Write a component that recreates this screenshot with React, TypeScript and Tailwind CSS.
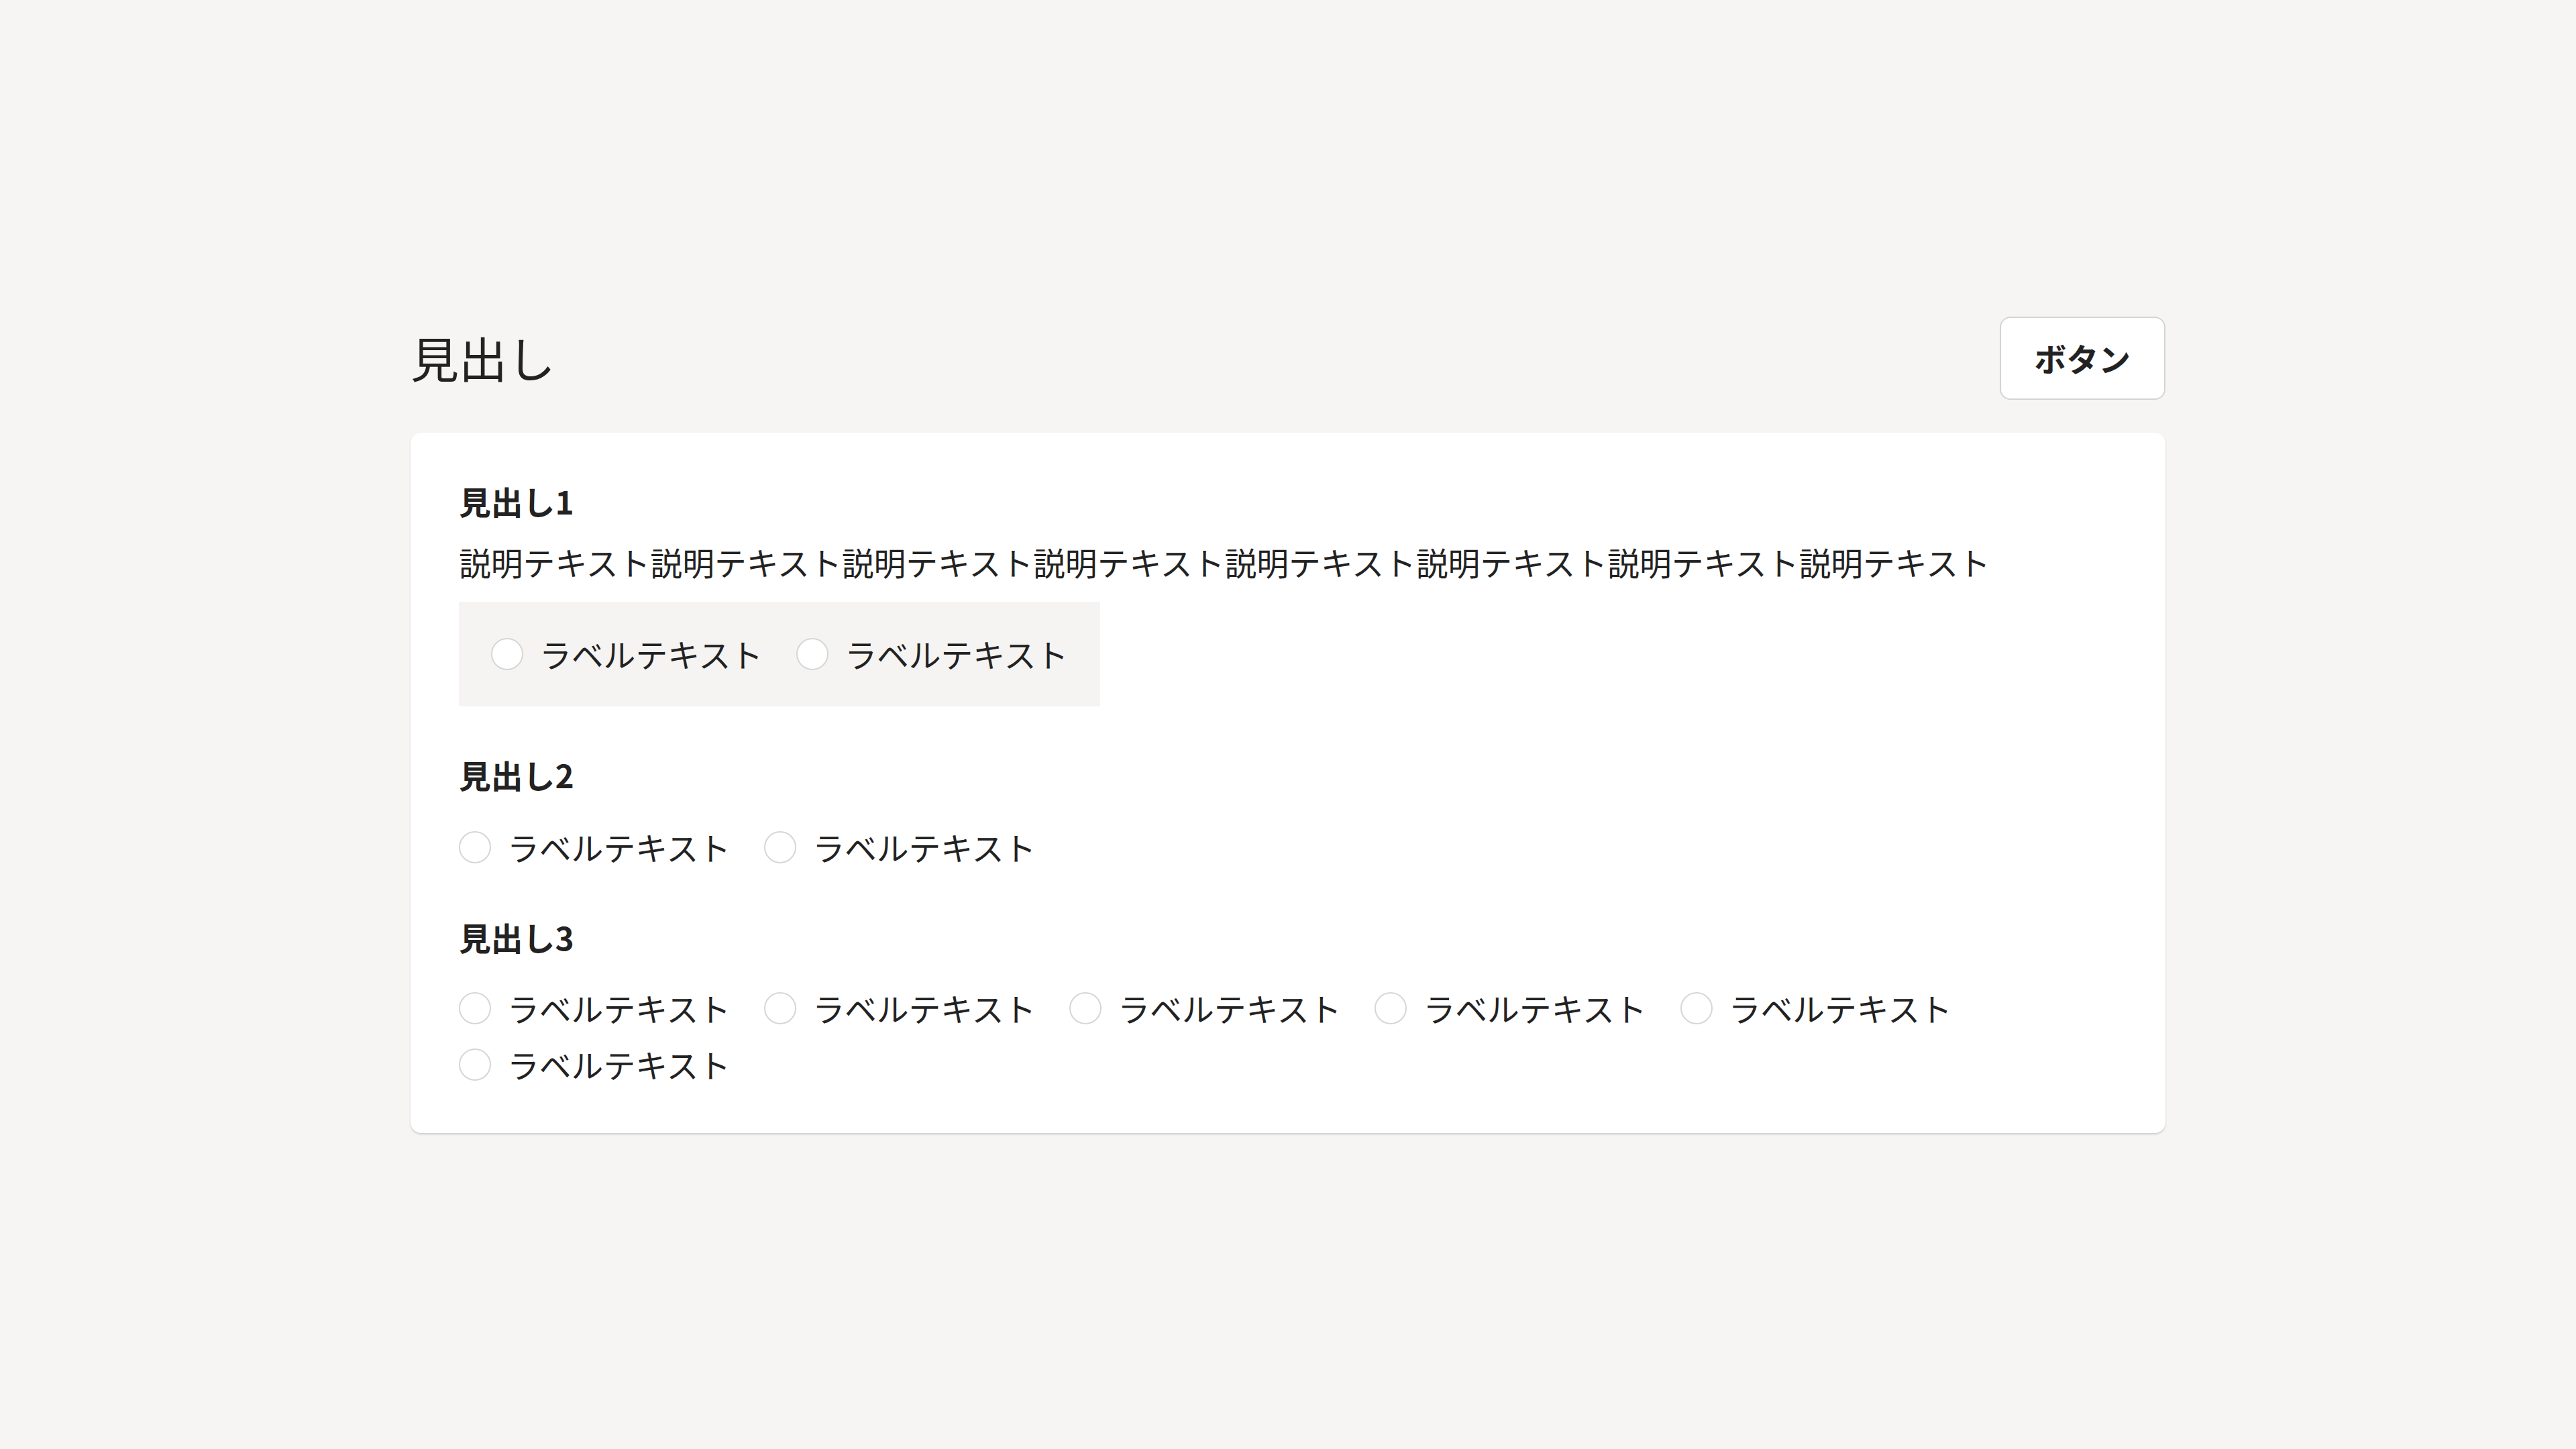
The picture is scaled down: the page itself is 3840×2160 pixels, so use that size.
import { useState } from "react";

const sectionOneOptions = ["ラベルテキスト", "ラベルテキスト"];
const sectionTwoOptions = ["ラベルテキスト", "ラベルテキスト"];
const sectionThreeOptions = [
  "ラベルテキスト",
  "ラベルテキスト",
  "ラベルテキスト",
  "ラベルテキスト",
  "ラベルテキスト",
  "ラベルテキスト",
];

interface RadioGroupProps {
  name: string;
  options: string[];
  className?: string;
}

function RadioGroup({ name, options, className = "" }: RadioGroupProps) {
  const [selected, setSelected] = useState<number | null>(null);

  return (
    <div className={`flex flex-wrap gap-x-[50px] gap-y-6 ${className}`}>
      {options.map((label, i) => (
        <label
          key={i}
          className="flex h-[60px] cursor-pointer items-center gap-6"
        >
          <input
            type="radio"
            name={name}
            checked={selected === i}
            onChange={() => setSelected(i)}
            className="m-0 h-12 w-12 shrink-0 appearance-none rounded-full border-[2.5px] border-[#d6d6d6] bg-white checked:border-[14px] checked:border-[#222]"
          />
          <span className="leading-[60px]">{label}</span>
        </label>
      ))}
    </div>
  );
}

export default function App() {
  return (
    <div className="min-h-screen bg-[#f6f5f3] font-['Noto_Sans_CJK_JP',sans-serif] text-[47.8px] text-[#222]">
      <div className="mx-auto w-[2616px] pt-[472px] pb-[200px]">
        <header className="flex items-center justify-between">
          <h1 className="mb-[6px] text-[72px] leading-[100px] font-normal">見出し</h1>
          <button className="mb-[2px] h-[124px] rounded-2xl border-2 border-[#d4d4d4] bg-white px-[50px] font-bold leading-[60px]">
            ボタン
          </button>
        </header>

        <section className="mt-[47px] rounded-2xl bg-white p-[72px] shadow-[0_2px_3px_rgba(0,0,0,0.16)]">
          <h2 className="font-bold leading-[60px]">見出し1</h2>
          <p className="mt-[31px] leading-[60px]">
            説明テキスト説明テキスト説明テキスト説明テキスト説明テキスト説明テキスト説明テキスト説明テキスト
          </p>
          <div className="mt-[29px] w-fit bg-[#f5f4f2] p-12">
            <RadioGroup name="q1" options={sectionOneOptions} />
          </div>

          <h2 className="mt-[72px] font-bold leading-[60px]">見出し2</h2>
          <RadioGroup name="q2" options={sectionTwoOptions} className="mt-12" />

          <h2 className="mt-[74px] font-bold leading-[60px]">見出し3</h2>
          <RadioGroup name="q3" options={sectionThreeOptions} className="mt-[46px]" />
        </section>
      </div>
    </div>
  );
}
